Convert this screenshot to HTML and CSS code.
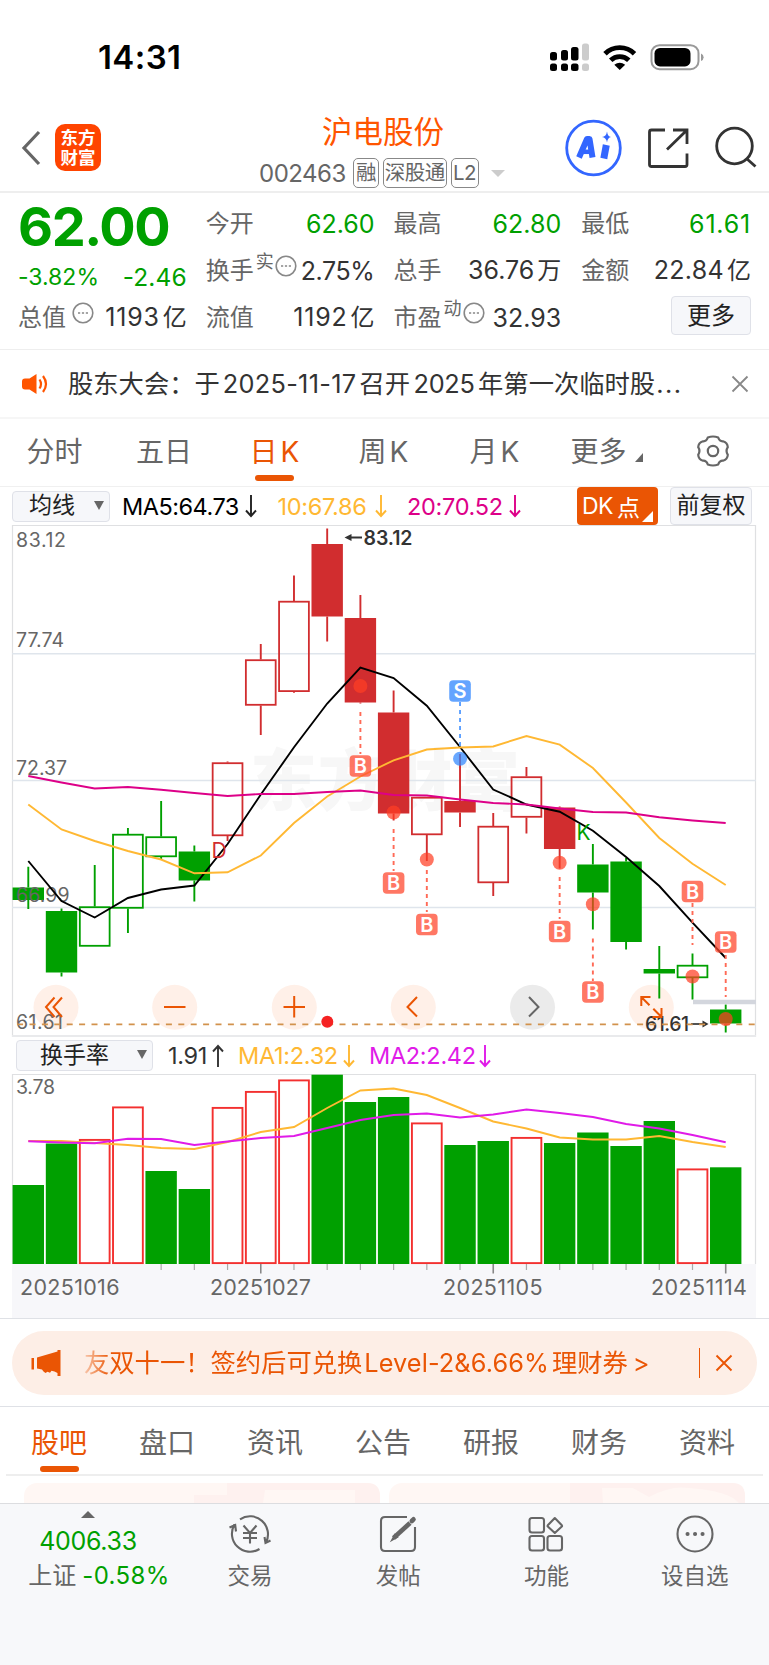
FILE: index.html
```html
<!DOCTYPE html>
<html lang="zh-CN">
<head>
<meta charset="utf-8">
<title>沪电股份 002463</title>
<link rel="stylesheet" href="styles.css">
</head>
<body>
<div class="status">
  <span class="clock">14:31</span>
  <svg class="status-icons" width="156" height="30" viewBox="550 42 156 30">
    <g fill="#000">
      <rect x="551" y="52" width="7" height="8.500" rx="2.500"/><rect x="562" y="50" width="7" height="10.500" rx="2.500"/><rect x="572" y="47" width="7.500" height="13.500" rx="2.500"/>
      <rect x="551" y="63.500" width="7" height="7.500" rx="2.500"/><rect x="562" y="63.500" width="7" height="7.500" rx="2.500"/><rect x="572" y="63.500" width="7.500" height="7.500" rx="2.500"/>
    </g>
    <g fill="#ccc"><rect x="583" y="43.500" width="7" height="17" rx="2.500"/><rect x="583" y="63.500" width="7" height="7.500" rx="2.500"/></g>
    <g fill="none" stroke="#000" stroke-width="4.900"><path d="M606 53.700A21 21 0 0 1 635.500 53.700"/><path d="M611.700 60.300A13 13 0 0 1 629.800 60.300"/></g>
    <path d="M615.300 64.700Q620.700 60.600 626.200 64.700L620.700 70Z"/>
    <rect x="652.500" y="45.200" width="47" height="24" rx="8" fill="none" stroke="#999" stroke-width="2"/>
    <rect x="655.500" y="48" width="36" height="18.400" rx="5.500"/>
    <path d="M702 53.500Q704.600 54.500 704.600 57.200T702 61Z" fill="#999"/>
  </svg>
</div>

<header class="header">
  <svg class="back" width="22" height="38" viewBox="0 0 22 38"><path d="M18 3L3 19L18 35" fill="none" stroke="#666" stroke-width="3.200"/></svg>
  <div class="logo"><span>东方</span><span>财富</span></div>
  <div class="title">
    <div class="name">沪电股份</div>
    <div class="code"><span class="num">002463</span><b class="b1">融</b><b class="b3">深股通</b><b class="b2">L2</b><i></i></div>
  </div>
  <svg class="tools" width="195" height="60" viewBox="564 118 195 60" fill="none">
    <circle cx="594.500" cy="148" r="26.800" stroke="#36f" stroke-width="2.800"/>
    <g stroke="#36f" stroke-width="6" stroke-linejoin="round"><path d="M580 157.500L588 139H590.500L593.500 157.500"/><path d="M584 151.800H592" stroke-width="4.500"/><path d="M607.300 145L604.800 158.500" stroke-width="7"/></g>
    <path d="M608 131.500Q608.700 136.500 612 137Q608.700 137.500 608 142.500Q607.300 137.500 603 137Q607.300 136.500 608 131.500Z" fill="#36f"/>
    <g stroke="#333" stroke-width="2.800"><path d="M666 130H652.500Q650.500 130 650.500 132V164.500Q650.500 166.500 652.500 166.500H686Q688 166.500 688 164.500V153.500M674 130H688V144M687.500 130.500L668 149.500"/><circle cx="735.500" cy="146" r="17.800"/><path d="M747.500 158.500L756.500 166.500"/></g>
  </svg>
</header>

<section class="quote">
  <div class="col c0">
    <div class="price">62.00</div>
    <div class="chg"><span>-3.82%</span><span class="abs">-2.46</span></div>
    <div class="cell"><span class="k">总值</span><svg class="info first" viewBox="0 0 22 22"><circle cx="11" cy="11" r="9.800"/><path d="M6 11h2.200M9.900 11h2.200M13.800 11h2.200"/></svg><span class="v w">1193<em>亿</em></span></div>
  </div>
  <div class="col c1">
    <div class="cell"><span class="k">今开</span><span class="v g">62.60</span></div>
    <div class="cell"><span class="k">换手</span><sup>实</sup><svg class="info" viewBox="0 0 22 22"><circle cx="11" cy="11" r="9.800"/><path d="M6 11h2.200M9.900 11h2.200M13.800 11h2.200"/></svg><span class="v n">2.75%</span></div>
    <div class="cell"><span class="k">流值</span><span class="v w">1192<em>亿</em></span></div>
  </div>
  <div class="col c2">
    <div class="cell"><span class="k">最高</span><span class="v g">62.80</span></div>
    <div class="cell"><span class="k">总手</span><span class="v">36.76<em>万</em></span></div>
    <div class="cell"><span class="k">市盈</span><sup>动</sup><svg class="info" viewBox="0 0 22 22"><circle cx="11" cy="11" r="9.800"/><path d="M6 11h2.200M9.900 11h2.200M13.800 11h2.200"/></svg><span class="v">32.93</span></div>
  </div>
  <div class="col c3">
    <div class="cell"><span class="k">最低</span><span class="v g w">61.61</span></div>
    <div class="cell"><span class="k">金额</span><span class="v m">22.84<em>亿</em></span></div>
    <div class="cell"><button class="more">更多</button></div>
  </div>
</section>

<section class="notice">
  <svg width="28" height="24" viewBox="21 371 28 24"><path d="M25 377.500H29.500L36.500 373V393L29.500 388.500H25Q22 388.500 22 385.500V380.500Q22 377.500 25 377.500Z" fill="#f50"/><path d="M39.500 378.500Q42.500 383 39.500 387.500M43 375Q49 383 43 391" fill="none" stroke="#f50" stroke-width="2.200"/></svg>
  <p>股东大会：于<span class="n1">2025-11-17</span>召开<span class="n2">2025</span>年第一次临时股<span class="dots">...</span></p>
  <svg class="x" width="18" height="18" viewBox="0 0 18 18"><path d="M1.500 1.500L16.500 16.500M16.500 1.500L1.500 16.500" stroke="#888" stroke-width="1.800"/></svg>
</section>

<nav class="periods">
  <a>分时</a><a>五日</a><a class="on">日<span>K</span></a><a>周<span>K</span></a><a>月<span>K</span></a><a class="drop">更多<i></i></a>
  <svg width="34" height="34" viewBox="-17 -17 34 34" fill="none" stroke="#666" stroke-width="2.200"><path d="M-5.200 -13.500Q0 -15.500 5.200 -13.500Q6.500 -9.500 10 -9.700Q14.500 -8.500 14.800 -3.800Q12.300 0 14.800 3.800Q14.500 8.500 10 9.700Q6.500 9.500 5.200 13.500Q0 15.500 -5.200 13.500Q-6.500 9.500 -10 9.700Q-14.500 8.500 -14.800 3.800Q-12.300 0 -14.800 -3.800Q-14.500 -8.500 -10 -9.700Q-6.500 -9.500 -5.200 -13.500Z"/><circle r="5.200"/></svg>
</nav>

<div class="legend">
  <div class="select s1">均线<i></i></div>
  <span class="ma m1">MA5:64.73</span><svg class="arr" viewBox="0 0 12 24"><path d="M6 1V22M1 16.500L6 22L11 16.500" stroke="#222"/></svg>
  <span class="ma m2">10:67.86</span><svg class="arr" viewBox="0 0 12 24"><path d="M6 1V22M1 16.500L6 22L11 16.500" stroke="#ffb833"/></svg>
  <span class="ma m3">20:70.52</span><svg class="arr" viewBox="0 0 12 24"><path d="M6 1V22M1 16.500L6 22L11 16.500" stroke="#d08"/></svg>
  <div class="dk">DK<span>点</span><i></i></div>
  <div class="adj">前复权</div>
</div>

<svg id="kline" class="plot" width="769" height="512" viewBox="0 525 769 512"></svg>

<div class="legend second">
  <div class="select s2">换手率<i></i></div>
  <span class="ma t1">1.91</span><svg class="arr" viewBox="0 0 12 24"><path d="M6 23V2M1 7.500L6 2L11 7.500" stroke="#333"/></svg>
  <span class="ma t2">MA1:2.32</span><svg class="arr" viewBox="0 0 12 24"><path d="M6 1V22M1 16.500L6 22L11 16.500" stroke="#ffb833"/></svg>
  <span class="ma t3">MA2:2.42</span><svg class="arr" viewBox="0 0 12 24"><path d="M6 1V22M1 16.500L6 22L11 16.500" stroke="#e01be8"/></svg>
</div>

<svg id="turnover" class="plot" width="769" height="244" viewBox="0 1074 769 244"></svg>

<section class="promo-wrap">
  <div class="promo">
    <svg width="32" height="28" viewBox="30 1349 32 28" fill="#ea5504"><path d="M31.500 1358H34V1369.500H31.500ZM37 1357.500L57.500 1351.500V1350H60.500V1376H57.500V1373L54.500 1371.500L51.500 1370.800L50 1372.800L47.500 1371.800L45.500 1373L43.500 1371.500L42 1369.500L37 1368.500Z"/></svg>
    <p>友双十一！签约后可兑换<span class="p1">Level-2&amp;6.66%</span>理财券<span class="gt">&gt;</span></p>
    <span class="bar"></span>
    <svg class="px" width="18" height="18" viewBox="0 0 18 18"><path d="M1.500 1.500L16.500 16.500M16.500 1.500L1.500 16.500" stroke="#ea5504" stroke-width="1.900"/></svg>
  </div>
</section>

<nav class="tabs"><a class="on">股吧</a><a>盘口</a><a>资讯</a><a>公告</a><a>研报</a><a>财务</a><a>资料</a></nav>

<div class="cards">
  <svg viewBox="0 0 356 20"><rect width="356" height="40" rx="13" fill="#fff7f4"/><path d="M203 0H343Q356 0 356 13V20H170V12H203Z" fill="#fef1ef"/><path d="M241 7H331V20H239Z" fill="#fff7f4"/></svg>
  <svg viewBox="0 0 356 20"><rect width="356" height="40" rx="13" fill="#fff7f4"/><path d="M181 0H343Q356 0 356 13V20H181Z" fill="#fef1ef"/><path d="M213 5H244L260 14Q282 2 300 5Q340 8 350 20H214Z" fill="#fff7f4"/></svg>
</div>

<footer class="bottom">
  <div class="index"><i></i><div class="iv">4006.33</div><div class="ir">上证<span>-0.58%</span></div></div>
  <a><svg viewBox="-22 -20 44 40"><path d="M-10 -14.700A18 18 0 0 1 16 8.500M9.500 15A18 18 0 0 1 -15.500 -9.500M-20.500 -6.500L-14.800 -9L-14 -2.500M20.500 6.500L15.500 9L14.500 3M-6.500 -8.500L0 -1L6.500 -8.500M0 -1V9.500M-7 -1H7M-7 4H7"/></svg>交易</a>
  <a><svg viewBox="-22 -20 44 40"><path d="M9 -17H-13Q-17 -17 -17 -13V13Q-17 17 -13 17H13Q17 17 17 13V-7"/><path d="M-4.500 4L12 -11" stroke-width="4.600"/><path d="M-5.500 5.500L-3 1L-1 3Z"/><path d="M13.800 -13L15.500 -14.700" stroke-width="4.600" stroke-linecap="round"/></svg>发帖</a>
  <a><svg viewBox="-22 -20 44 40"><rect x="-16.500" y="-16" width="14.500" height="14.500" rx="2.500"/><rect x="-16.500" y="2" width="14.500" height="14.500" rx="2.500"/><rect x="1.500" y="2" width="14.500" height="14.500" rx="2.500"/><path d="M8.800 -16L15.800 -8.800Q16.300 -8 15.800 -7.500L8.800 -1L1.800 -7.500Q1.300 -8 1.800 -8.800Z" stroke-linejoin="round"/></svg>功能</a>
  <a><svg viewBox="-22 -20 44 40"><circle r="17.500"/><path d="M-7.500 0H-7.400M0 0H.1M7.500 0H7.600" stroke-width="4" stroke-linecap="round"/></svg>设自选</a>
</footer>
<script src="chart.js"></script>
</body>
</html>
```
FILE: styles.css
```css
* { box-sizing: border-box; }
body { margin: 0; width: 769px; height: 1665px; overflow: hidden; background: #fff; color: #333; font-family: Inter, "Noto Sans CJK SC", sans-serif; font-feature-settings: "calt" 0; }
p { margin: 0; }
svg { display: block; flex: none; }
i { font-style: normal; }
a, span, b, em { white-space: nowrap; }

.status { height: 108px; display: flex; justify-content: space-between; padding: 0 64px 0 98px; }
.clock { margin-top: 38px; font-size: 33px; line-height: 39px; font-weight: 600; color: #000; letter-spacing: .4px; }
.status-icons { margin-top: 42px; }

.header { height: 85px; border-bottom: 2px solid #eee; display: flex; align-items: flex-start; }
.back { margin: 21px 0 0 20.500px; }
.logo { margin: 16px 0 0 12.500px; width: 46px; height: 47px; border-radius: 10px; background: #ff4400; color: #fff; display: flex; flex-direction: column; align-items: center; justify-content: center; font-size: 17.500px; font-weight: 700; line-height: 19.500px; }
.title { flex: 1; display: flex; flex-direction: column; margin-left: 158px; }
.name { margin: 5.500px 0 0 63px; font-size: 30.500px; line-height: 36px; color: #ff5500; }
.code { display: flex; align-items: center; height: 30px; margin-top: 8.500px; color: #666; }
.num { font-size: 24px; letter-spacing: -.5px; width: 94px; margin-left: 0; }
.code b { height: 30px; border: 1.500px solid #888; border-radius: 5px; font-weight: 400; font-size: 20.500px; line-height: 27px; text-align: center; letter-spacing: -.5px; }
.b1 { width: 26px; margin-right: 3.500px; }
.b3 { width: 64.500px; margin-right: 3.500px; }
.b2 { width: 28px; }
.code i { margin-left: 12px; border: 7px solid transparent; border-top-color: #ccc; border-bottom: 0; }
.tools { margin: 10px 11px 0 0; }

.quote { height: 157px; border-bottom: 1px solid #eee; display: flex; padding: 7px 18px 0 18px; }
.col { display: flex; flex-direction: column; }
.c0 { width: 169px; margin-right: 19px; }
.c1 { width: 169px; margin-right: 19px; }
.c2 { width: 168px; margin-right: 20px; }
.c3 { width: 170px; }
.cell { height: 47px; display: flex; align-items: center; }
.k { font-size: 24px; line-height: 34px; color: #666; }
.v { margin-left: auto; font-size: 25px; line-height: 34px; letter-spacing: 0; white-space: nowrap; }
.v.w { letter-spacing: .8px; }
.v.m { letter-spacing: .3px; }
.v.n { letter-spacing: -.4px; }
.v em { font-style: normal; margin-left: 3px; font-size: 24px; letter-spacing: 0; }
.g { color: #00a000; }
.cell sup { font-size: 18px; line-height: 20px; color: #666; margin: -17px 0 0 2px; }
.info { width: 22px; height: 22px; margin: -10px 0 0 1px; fill: none; stroke: #888; stroke-width: 1.600; }
.info.first { margin-left: 6px; margin-top: -10px; }
.price { height: 54px; font-size: 54px; line-height: 53px; font-weight: 700; color: #00a000; letter-spacing: -1.400px; }
.chg { height: 40px; display: flex; justify-content: space-between; align-items: center; padding-top: 6px; color: #00a000; font-size: 23px; letter-spacing: 0; }
.chg .abs { font-size: 24.500px; letter-spacing: .1px; }
.more { margin-left: auto; width: 80px; height: 39px; margin-top: -4px; border: 1.500px solid #dfe1e8; border-radius: 4px; background: #f6f7fa; font: 24px/34px Inter, "Noto Sans CJK SC", sans-serif; color: #222; padding: 0; }

.notice { height: 69px; border-bottom: 2px solid #f6f6f6; display: flex; align-items: center; padding: 0 20px 0 21px; }
.notice p { margin-left: 19px; font-size: 25.300px; line-height: 36px; white-space: nowrap; }
.n1 { letter-spacing: .3px; margin: 0 3px; }
.n2 { letter-spacing: -.3px; margin: 0 3.500px; }
.dots { letter-spacing: 1.500px; margin-left: 1px; }
.x { margin-left: auto; }

.periods { height: 68px; border-bottom: 1px solid #f0f0f0; display: grid; grid-template-columns: 109px 110px 111px 107px 115px 109px 1fr; font-size: 28px; line-height: 40px; color: #666; align-items: start; }
.periods a { text-align: center; padding-top: 13px; height: 62px; }
.periods a span { margin-left: 3px; }
.periods a.on, .tabs a.on { color: #ea5504; }
.periods .on::after { content: ""; display: block; width: 39px; height: 6px; border-radius: 3px; background: #ea5504; margin: 3px auto 0; }
.periods i { display: inline-block; margin-left: 8px; border-left: 8px solid transparent; border-bottom: 9px solid #666; }
.periods svg { margin: 15px 0 0 35px; }

.legend { height: 38px; display: flex; align-items: center; font-size: 24px; }
.select { height: 31px; border: 1.500px solid #dfe1e8; border-radius: 4px; background: #f6f7fa; display: flex; align-items: center; justify-content: space-between; font-size: 23px; line-height: 24px; color: #222; }
.select i { border: 5px solid transparent; border-top: 9px solid #666; border-bottom: 0; }
.s1 { width: 98px; margin: 0 12px 0 12px; padding: 0 5px 2px 16px; }
.s2 { width: 137px; margin: 0 15px 0 16px; padding: 0 5px 2px 23px; }
.ma { font-size: 23.500px; letter-spacing: -.3px; }
.arr { width: 12px; height: 24px; fill: none; stroke-width: 1.900; }
.m1 { color: #000; width: 123px; letter-spacing: -.5px; }
.m2 { color: #ffb833; width: 97px; margin-left: 20.500px; }
.m3 { color: #d08; width: 102px; margin-left: 20.500px; }
.dk { margin-left: auto; width: 81px; height: 38px; border-radius: 4px; background: #ea5504; color: #fff; display: flex; align-items: center; padding-left: 5px; font-size: 23px; letter-spacing: -.5px; position: relative; }
.dk span { margin-left: 4px; }
.dk i { position: absolute; right: 5px; bottom: 3px; border-left: 11px solid transparent; border-bottom: 11px solid #fff; }
.adj { width: 82px; height: 38px; margin: 0 17px 0 12px; border: 1.500px solid #dfe1e8; border-radius: 4px; background: #f6f7fa; font-size: 23px; line-height: 34px; text-align: center; color: #222; }
.second { height: 37px; }
.t1 { width: 44px; }
.t2 { width: 105px; color: #ffb833; margin-left: 14px; }
.t3 { width: 110px; color: #e01be8; margin-left: 14px; }

.plot { display: block; }
.grid { stroke: #dfe5ec; stroke-width: 1.500; fill: none; }
.frame { stroke: #dfe0e2; stroke-width: 1.200; fill: none; }
.line { fill: none; stroke-width: 1.900; }
.lbl { font-size: 19.500px; fill: #666; }
.date { font-size: 21.500px; fill: #666; }
.tag { font-size: 20px; font-weight: 600; fill: #fff; text-anchor: middle; }
.wm { font-size: 67px; font-weight: 900; fill: #f7f7f7; }

.promo-wrap { height: 89px; border-top: 1px solid #dfe1e6; border-bottom: 1px solid #dfe1e6; padding: 12px 12px 0; }
.promo { height: 64px; border-radius: 32px; background: #fdeee6; display: flex; align-items: center; padding: 0 24px 0 18px; color: #ea5504; }
.promo p { margin-left: 22px; font-size: 25.300px; line-height: 36px; white-space: nowrap; -webkit-mask-image: linear-gradient(90deg, rgba(0,0,0,.25), #000 26px); mask-image: linear-gradient(90deg, rgba(0,0,0,.25), #000 26px); }
.p1 { margin: 0 3px 0 2px; letter-spacing: .1px; }
.gt { margin-left: 5px; }
.bar { width: 1.500px; height: 30px; background: #ea5504; margin-left: auto; margin-right: 15px; }

.tabs { height: 69px; margin: 0 6px; border-bottom: 2px solid #eee; display: flex; padding-left: 0; font-size: 28px; line-height: 40px; color: #666; }
.tabs a { width: 108px; flex: none; text-align: center; padding-top: 15.500px; }
.tabs a:first-child { margin-left: -1px; }
.tabs .on::after { content: ""; display: block; width: 39px; height: 6px; border-radius: 3px; background: #ea5504; margin: 3px auto 0; }
.cards { height: 27px; display: flex; gap: 9px; padding: 7px 24px 0; }
.cards svg { width: 356px; height: 20px; }

.bottom { height: 162px; background: #f7f8fa; border-top: 1.500px solid #dcdde0; display: flex; }
.index { width: 176px; display: flex; flex-direction: column; align-items: center; color: #00a000; }
.index i { margin-top: 7px; border: 7px solid transparent; border-bottom-color: #666; border-top: 0; }
.iv { font-size: 25px; line-height: 30px; letter-spacing: -.3px; margin-top: 8px; }
.ir { font-size: 24px; line-height: 34px; color: #666; margin: 3px 0 0 22px; white-space: nowrap; }
.ir span { color: #00a000; margin-left: 6px; letter-spacing: .4px; }
.bottom a { width: 148.200px; display: flex; flex-direction: column; align-items: center; font-size: 22.500px; line-height: 32px; color: #666; padding-top: 10px; }
.bottom a svg { width: 44px; height: 40px; margin-bottom: 6px; fill: none; stroke: #666; stroke-width: 2.100; }
```
FILE: chart.js
```js
const RED = '#d12d2f', GREEN = '#00a000';
const cx = i => 28.3 + 33.21 * i;
const put = (id, html) => { document.getElementById(id).innerHTML = html; };
const line = (ys, color) => `<polyline class="line" stroke="${color}" points="${ys.map((y, i) => cx(i).toFixed(1) + ',' + y).join(' ')}"/>`;
const text = (cls, x, y, w, s, extra = '') => `<text class="${cls}" x="${x}" y="${y}" textLength="${w}" ${extra}>${s}</text>`;

// colour, filled, high, body top, body bottom, low
const candles = [
  ['g', 1, 866.7, 887.5, 900, 909], ['g', 1, 908.5, 911, 972.5, 976.5], ['g', 0, 865, 906.5, 946.5, 946.5],
  ['g', 0, 828, 834, 908.5, 933], ['g', 0, 801, 836.5, 857, 859], ['g', 1, 845.5, 851.5, 880.5, 901.5],
  ['r', 0, 761.5, 762.5, 836, 841], ['r', 0, 644, 659.5, 705.5, 735], ['r', 0, 575.5, 601, 691.8, 692.8],
  ['r', 1, 528.5, 544, 616.5, 641.5], ['r', 1, 595, 618, 702.5, 703.5], ['r', 1, 690.5, 712.5, 813.5, 820.5],
  ['r', 0, 797, 797, 835, 861], ['r', 1, 754, 801, 812.5, 827], ['r', 0, 813, 826, 883, 896],
  ['r', 0, 767, 776.5, 817.5, 833.5], ['r', 1, 806.5, 807.5, 849, 868.5], ['g', 1, 844, 864.5, 892.5, 929.5],
  ['g', 1, 858, 861.5, 942, 949.5], ['g', 1, 946, 969, 973.5, 998.5], ['g', 0, 953.5, 965, 978, 999.5],
  ['g', 1, 1004.5, 1009.5, 1023.5, 1032.5]
];
const ma5 = [861, 901, 917.5, 898, 889.5, 885.5, 844, 794.5, 747.3, 703.5, 667.7, 678, 705.7, 747, 789.5, 804.5, 811.7, 830.7, 857, 886, 922.7, 958];
const ma10 = [804.5, 829.5, 841, 851, 859.5, 873.3, 872.3, 855.5, 823, 796.5, 776.5, 760.3, 749.5, 747.5, 746.5, 736, 744.7, 768, 802.5, 838, 863.7, 885];
const ma20 = [776, 782.5, 788.5, 787, 789.7, 793, 796, 794, 794, 792, 790.5, 795, 795.5, 799.5, 803, 804.5, 808.5, 812, 812.5, 817.3, 820.5, 823];

// index, letter, dot y, dash start, dash end, tag y
const marks = [
  [10, 'B', 686, 712, 754, 766], [11, 'B', 812.5, 829, 871, 883], [12, 'B', 859.5, 870, 912, 924.5],
  [13, 'S', 758.7, 702, 746, 691], [16, 'B', 862.8, 877, 919, 931.5], [17, 'B', 904.3, 938.500, 981, 992],
  [20, 'B', 976.5, 903, 945, 891.5], [21, 'B', 1019, 955, 997, 942]
];

let k = '<text class="wm" x="250" y="805" textLength="270">东方财富</text>';
k += '<path class="frame" d="M12.500 1037V525.500H755.500V1037"/><path d="M12 1036H756" stroke="#e9eaec" stroke-width="2"/>';
k += '<path class="grid" d="M12 653.700H756M12 780.500H756M12 907.500H756"/>';
k += [[56, '#fff0e8'], [174.700, '#fff0e8'], [294.300, '#fff0e8'], [413.300, '#fff0e8'], [532.500, '#ebebeb'], [651.300, '#fff0e8']]
  .map(([x, c]) => `<circle cx="${x}" cy="1007.300" r="22.500" fill="${c}"/>`).join('');
candles.forEach(([c, fill, hi, top, bot, lo], i) => {
  const col = c === 'g' ? GREEN : RED, x = cx(i);
  k += `<path d="M${x} ${hi}V${top}M${x} ${bot}V${lo}" stroke="${col}" stroke-width="1.900"/>`;
  k += fill ? `<rect x="${x - 15.7}" y="${top}" width="31.400" height="${bot - top}" fill="${col}"/>`
    : `<rect x="${x - 14.9}" y="${top + .7}" width="29.800" height="${bot - top - 1.4}" fill="none" stroke="${col}" stroke-width="1.800"/>`;
});
k += text('lbl', 16, 547, 50, '83.12') + text('lbl', 16, 646.7, 48, '77.74') + text('lbl', 16, 775, 51, '72.37') + text('lbl', 16, 901.5, 53.5, '66.99') + text('lbl', 16, 1029, 47, '61.61');
k += '<path d="M693 1002H756" stroke="#d3d6dd" stroke-width="4.500"/>';
k += text('lbl', 645, 1031, 44, '61.61', 'style="fill:#333;font-weight:500"') + '<path d="M691 1024H704" stroke="#333" stroke-width="1.700"/><path d="M708.500 1024L702.500 1020.500V1027.500Z" fill="#333"/>';
k += '<path d="M12.500 1024.300H756" stroke="#d2924c" stroke-width="1.700" stroke-dasharray="6 6.400" stroke-dashoffset="7.800"/>';
k += line(ma5, '#000') + line(ma10, '#ffb833') + line(ma20, '#d08');
marks.forEach(([i, s, dot, a, b, y]) => {
  const x = cx(i), blue = s === 'S';
  k += `<circle cx="${x}" cy="${dot}" r="7" fill="${blue ? '#2f86ff' : '#ff3e24'}" opacity=".72"/>`;
  k += `<path d="M${x} ${a}V${b}" stroke="${blue ? '#5a9fff' : '#ff6a56'}" stroke-width="1.900" stroke-dasharray="4 4"/>`;
  k += `<rect x="${x - 10.8}" y="${y - 10.8}" width="21.600" height="21.600" rx="4" fill="${blue ? '#2f86ff' : '#ff4a30'}" opacity=".75"/>`;
  k += `<text class="tag" x="${x}" y="${y + 7.2}">${s}</text>`;
});
k += `<text x="211.500" y="858" font-size="21" fill="${RED}">D</text><text x="576.500" y="839.500" font-size="21" fill="${GREEN}">K</text>`;
k += '<path d="M362 537.500H350" stroke="#333" stroke-width="2"/><path d="M344.500 537.500L351.500 534V541Z" fill="#333"/>' + text('lbl', 363.500, 544.500, 49, '83.12', 'style="fill:#333;font-weight:600"');
k += '<circle cx="327.300" cy="1021.800" r="6" fill="#f52222"/>';
k += '<g fill="none" stroke="#ea5504" stroke-width="2"><path d="M54.500 997.500L46 1007L54.500 1017M62 997.500L53.500 1007L62 1017"/><path d="M164 1007H185.500M283.500 1007H305M294.200 996V1017.500M417 997L407.500 1007L417 1016.500M641.300 1006V997H650.500M641.300 997L649.500 1005.200M653.300 1008.700L661.500 1017M652.500 1017H661.500V1008"/></g><path d="M529 997L538.500 1007L529 1016.500" fill="none" stroke="#666" stroke-width="2"/>';
put('kline', k);

const bars = [['g', 1185], ['g', 1143.5], ['r', 1139], ['r', 1106.5], ['g', 1171], ['g', 1189], ['r', 1107], ['r', 1091], ['r', 1079.5], ['g', 1074.7], ['g', 1102], ['g', 1097], ['r', 1122.5], ['g', 1145], ['g', 1141], ['r', 1137], ['g', 1143], ['g', 1132.5], ['g', 1146], ['g', 1121], ['r', 1168.5], ['g', 1167.3]];
const t1 = [1141, 1141, 1143, 1145, 1148, 1149, 1142, 1132, 1127, 1108, 1090.5, 1088.5, 1095, 1108, 1121.5, 1128.5, 1137.5, 1139.5, 1139.5, 1136, 1142, 1147];
const t2 = [1141.3, 1142.5, 1143.3, 1138.8, 1139, 1145, 1141.5, 1138, 1136, 1128, 1120, 1115, 1113.5, 1117.5, 1114.5, 1109.5, 1113, 1117, 1124, 1128.5, 1135, 1142.3];
let v = '<rect x="12" y="1264" width="744" height="54" fill="#f7f7fa"/><path class="frame" d="M12.500 1264V1074.500H755.500V1264"/>';
bars.forEach(([c, top], i) => {
  const x = cx(i);
  v += c === 'g' ? `<rect x="${x - 15.7}" y="${top}" width="31.400" height="${1264 - top}" fill="${GREEN}"/>`
    : `<rect x="${x - 14.9}" y="${top + .9}" width="29.800" height="${1262.2 - top}" fill="none" stroke="#f3302f" stroke-width="1.900"/>`;
  if (i > 3) v += `<path d="M${x} 1264V${i % 7 ? 1270 : 1273.5}" stroke="${i % 7 ? '#aaa' : '#888'}" stroke-width="${i % 7 ? 1.2 : 1.600}"/>`;
});
v += line(t1, '#ffb833') + line(t2, '#e01be8') + text('lbl', 16, 1093.500, 39, '3.78');
v += text('date', 20, 1295, 99.500, '20251016') + text('date', 210, 1295, 101, '20251027') + text('date', 443, 1295, 99.500, '20251105') + text('date', 651, 1295, 96, '20251114');
put('turnover', v);
```
